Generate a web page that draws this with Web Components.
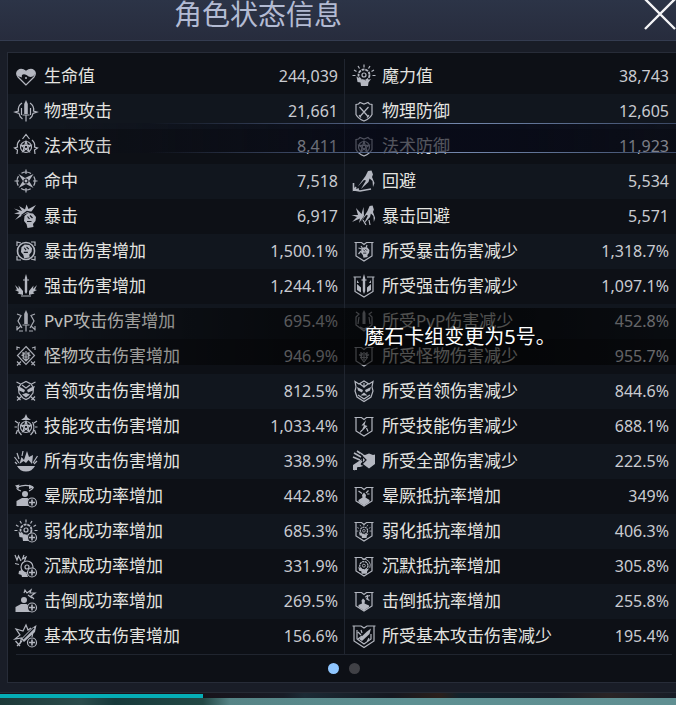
<!DOCTYPE html>
<html lang="zh-CN">
<head>
<meta charset="utf-8">
<meta name="viewport" content="width=device-width, initial-scale=1">
<title>角色状态信息</title>
<style>
  body {
    margin: 0;
    background: #191d27;
    color: #e4e4e0;
    font-family: "Noto Sans", "Noto Sans CJK SC", sans-serif;
    overflow: hidden;
  }
</style>
</head>
<body>
<status-window></status-window>

<script>
const PLUS = `<circle cx="18" cy="18.5" r="4.5" fill="#10141b"/><path d="M18 15.5v6M15 18.5h6" stroke-width="1.6"/>`;
const SHIELD = `<path d="M4 5.5 6.5 5 8 3.5 12 5 16 3.5 17.5 5 20 5.5V15.5Q18 19.5 12 22 6 19.5 4 15.5z"/>`;
const BANNER = `<path d="M2.5 3.5H9.5L12 5.5 14.5 3.5H21.5M4 3.5V17L12 22 20 17V3.5"/>`;
const STAR = `<circle cx="12" cy="13" r="5.5"/><path d="M12 7.500 15.200 17.500 7 11.300H17L8.800 17.500z"/>`;
const FIST = `<path class="f" d="M7 9 10.500 6 15.500 6.500 18.500 10 18 14 15.500 17 16 20 10 21 9 17 6.500 14z"/><path class="d" d="M10 9.500 12 12M12.500 8.500 15 11M9.500 14.500H14"/>`;
const HEAD = `<path class="f" d="M4.500 12.500 5.500 18 8.500 18.500 9 22H16L16.500 18.500 19 15 14 16.500 8 15z"/><circle cx="12" cy="11" r="5.500" stroke-width="1.800" stroke-dasharray="3 .800"/><circle cx="12" cy="11" r="2"/>`;
const RAYS = `<path d="M12 .500V3.500M6 2 7.500 4.500M18 2 16.500 4.500M2 6 4.500 7.500M22 6 19.500 7.500M.500 11.500H3.500M20.500 11.500H23.500"/>`;
const PERSON = `<circle class="f" cx="11" cy="10" r="3"/><path class="f" d="M2.500 22V17L8 14H13.500L17 16.500V22z"/>`;
const SWORD = `<path class="f" d="M12 1 13.800 5V15H10.200V5z"/><path d="M8.500 16H15.500M12 16V22.500"/>`;

const RUNNER = `<path class="f" d="M16 2 19.500 1.500 21 5.500 20 8 22.500 14 21 18 20.500 12 17.500 9.500 16.500 13 9 20 14 11.500 12 11 5.500 18 13.500 7z"/>`;

const ICONS = {
  heart: `<path d="M12 21 4 13C.500 8 5.500 2.500 12 7.500 18.500 2.500 23.500 8 20 13z"/><path class="f" d="M3.500 12C1 6.500 6.500 3 12 7.500 17.500 3 23 6.500 20.500 11 18 13.500 15.500 13.500 12.500 11 9.500 9.500 7 10.500 8 13.500z"/><circle class="f" cx="12" cy="14" r="1"/>`,
  blade: `${SWORD}<path d="M8 4Q3.500 7 4.500 12L1 13 5 14.500Q5.500 18 8.500 20M16 4Q20.500 7 19.500 12L23 13 19 14.500Q18.500 18 15.500 20M7.500 9V16M16.500 9V16"/>`,
  magic: `${STAR}<path d="M8.500 5 12 .500 15.500 5M6 6Q2.500 9 3.500 13L.500 14 3.500 16 3 20M18 6Q21.500 9 20.500 13L23.500 14 20.500 16 21 20"/>`,
  aim: `<circle cx="12" cy="12" r="9" stroke-dasharray="10 4.137" stroke-dashoffset="5"/><path d="M12 .500V5M12 19V23.500M.500 12H5M19 12H23.500"/><path class="f" d="M4.500 5 11 9 19.500 5 15 12 19.500 19 12 15 4.500 19 9 12z"/><circle class="d" cx="12" cy="12" r="2"/>`,
  crit: `<path class="f" d="M0 4.500 8 7 5 2 11 5.500 12.500 .500 14.500 5 22 1 17.500 7.500 9 11 1 16 6 10.500 0 9.500 5.500 8z"/><path class="d" d="M7 21 8 11 13 7.500 21 9"/><g transform="translate(3.500 3)">${FIST}</g>`,
  fist: `<circle cx="12" cy="12" r="8.500" stroke-width="1.600"/><g transform="translate(1 0) scale(.92)">${FIST}</g><path d="M3 7V3L7 4M21 17V21L17 20M3 17V21H7M17 3H21V7"/>`,
  heavy: `<path class="f" d="M12 0 13.200 4V18L12 20 10.800 18V4z"/><path d="M9 6H15M7 22H17"/><path class="f" d="M1 11 5 15 4.500 11.500 9 17V21L3.500 19.500 5 18 1 16 3 15.500zM23 11 19 15 19.500 11.500 15 17V21L20.500 19.500 19 18 23 16 21 15.500z"/>`,
  pvp: `${SWORD}<path d="M3 5 7 6.500 4 12 8 19M21 5 17 6.500 20 12 16 19M2.500 21 7 17M21.500 21 17 17M5 22H9M19 22H15M3 17V21.500M21 17V21.500"/>`,
  beast: `<path d="M12 2.500 20.500 11.500 12 20.500 3.500 11.500z"/><path d="M3 6V3L6 4M21 6V3L18 4M3 21.500 7 17.500M21 21.500 17 17.500M3 17.500 6.500 21M21 17.500 17.500 21"/><path d="M9 8V12L7.500 11M15 8V12L16.500 11M12 7V16M10.500 8.500 9 14 12 17 15 14 13.500 8.500M9 13H15"/>`,
  boss: `<path d="M7 5 12 2.500 17 5 19.500 9 19 14 15 19 12 20.500 9 19 5 14 4.500 9z"/><path d="M2.500 3 6.500 5M21.500 3 17.500 5M3 21.500 8 17M21 21.500 16 17M3 17.500 6.500 21M21 17.500 17.500 21M8 6 12 9 16 6"/><path class="f" d="M3 7 7 8.500 11 11 10 13.500 5 11.500zM21 7 17 8.500 13 11 14 13.500 19 11.500zM8 15.500 12 14 16 15.500 12 18.500z"/>`,
  skill: `${STAR}<path class="f" d="M12 0 13.500 3.500 17 6H7L10.500 3.500z"/><path d="M5.500 8Q3 12 5 18L7.500 21M18.500 8Q21 12 19 18L16.500 21M1 7 4 9M23 7 20 9M.500 13H3M21 13H23.500M3.500 16 2 20M20.500 16 22 20"/>`,
  all: `<path class="f" d="M5.500 15 7.500 8 10 11 13 2 15 8 19 6 18 15 14.500 11 12 14 9.500 12zM3 17H21Q18 22.500 12 22.500 6 22.500 3 17z"/><path d="M5 14 .500 8M5 10 3 4M19 14 23.500 7M20 15 23 12M8 7 9 2M3 15 1 13"/>`,
  stun: `<path d="M7 7Q1 5 4 3 9 .500 17 2 22 3.500 15 7"/><path class="f" d="M1 1.500 5.500 .500 4.500 5zM15 .500 20 3.500 15 5z"/>${PERSON}${PLUS}`,
  weak: `${HEAD}${RAYS}${PLUS}`,
  silence: `<path d="M1 1 3 6 4.500 2 7 7M10 1 8.500 5 12 3 10.500 7M1 9.500 5 10.500"/><g transform="translate(1 2)"><path class="f" d="M4 15 7 14 12 18 13 21H7L6.500 19 3.500 18z"/><circle cx="12" cy="11" r="6"/><circle cx="12" cy="11" r="2"/></g>${PLUS}`,
  knock: `<path d="M10 4 11 1 13 4 17 1 16 4 21 4 17 7 20 10M14 6 18 9"/><g transform="translate(-1 1)">${PERSON}</g>${PLUS}`,
  basic: `<path d="M6 20 7.500 14 1 15 6 11 2 5 9 7 12 1 14 6 17 4M19 8 18 13M3 22 8 17M1.500 17 6 22"/><path class="f" d="M22.500 1 21 8 10 18 7 15 18 4z"/><path class="d" d="M20 4 9 15"/>${PLUS}`,
  mana: `${HEAD}${RAYS}`,
  guard: `${SHIELD}<path d="M7.500 8 16.500 18M16.500 8 7.500 18M7 16 9 18.500M17 16 15 18.500"/>`,
  ward: `${SHIELD}${STAR}`,
  dodge: `${RUNNER}<path d="M1.500 14V21M2 21 8 22 19 20M4 18 2 21 7 20" stroke-width="1.600"/>`,
  critdodge: `<g transform="translate(4 0) scale(.85 1)">${RUNNER}</g><path class="f" d="M4 4 9.500 10 11.500 3 12 12 7 19 8 14.500 0 18 5 13-.500 11 6 11z"/><path d="M11 16 14 21M17 16 18 21"/>`,
  rcrit: `${BANNER}<g transform="translate(4.500 4) scale(.7)">${FIST}</g><path d="M6.500 9 10 10M9 7 11 10M6.500 15 9 12M15 6 14 9"/>`,
  rheavy: `<path d="M1.500 3H9M15 3H22.500M3 3V17.500L12 23 21 17.500V3"/><path class="f" d="M12 0 13.200 4V17L12 20 10.800 17V4zM5 10 9 13.500V18.500L5 16zM19 10 15 13.500V18.500L19 16zM5 6 7 9 5 9zM19 6 17 9 19 9z"/><path d="M9.500 6H14.500"/>`,
  rpvp: `<path d="M4 3 7 5 4 8V16L12 22 20 16V8L17 5 20 3M7 8 6 15M17 8 18 15M8 18 12 20 16 18"/><path class="f" d="M12 1 13.500 4V15H10.500V4z"/>`,
  rbeast: `${BANNER}<path d="M9 8V12L7 10.500M15 8V12L17 10.500M12 8V16M10.500 9 9 14 12 18 15 14 13.500 9M8 13.500H16"/>`,
  rboss: `<path d="M3 2.500 7 5 12 2 17 5 21 2.500 20 8 21 12 19 18 12 22.500 5 18 3 12 4 8zM6 16 12 20 18 16M12 4V9M8 5 12 8 16 5"/><path class="f" d="M5 8 11 11 10 13.500 6 11.500zM19 8 13 11 14 13.500 18 11.500zM8.500 16.500 12 13.500 15.500 16.500z"/>`,
  rskill: `${BANNER}<path class="f" d="M14 6 9.500 11.500 12 11.500 9 18 15.500 12 12.500 11z"/><path d="M8 18.500 10 16M14.500 14 16 17.500"/>`,
  rall: `<path class="f" d="M11 5.500 13 6 17 4.500 21 6 23 5.500V15L17 19.500 11 15zM1 16 10 10 8 14 11 17 8 18 5 18V21H1z"/><path d="M2 4 9 8M5 2 11 6M1 8 8 11M2 21 10 12" stroke-width="1.600"/><path class="d" d="M8 5 14 11 9 16"/>`,
  rstun: `${BANNER}<path d="M6.500 7 10 9.500M16.500 6.500 14 9M15 10H17.500"/><path class="f" d="M12 8.500 14 11 13.500 13.500 17.500 16V18L12 21.500 6.500 18V16L10.500 13.500 10 11z"/>`,
  rweak: `${BANNER}<g transform="translate(4 4.500) scale(.66)">${HEAD}${RAYS}</g>`,
  rsilence: `${BANNER}<g transform="translate(3 3.500) scale(.74)">${HEAD}<path d="M10 2.500A8.500 8.500 0 0 1 20 14"/></g>`,
  rknock: `${BANNER}<path d="M13 8 18 6.500M14 9.500 17.500 11.500M15 6 16 11"/><path class="f" d="M11 9.500 13 11.500 12.500 14.500 17 16.500V18L12 21.500 6.500 18V16L10 14.500 9.500 11.500z"/>`,
  rbasic: `<path d="M.500 2H9L12 4 15 2H23.500M2 2V17L12 23.500 22 17V2"/><path d="M5 6V15L12 20 19 15V10M6 8 9 11M6 15 10 12M15 18 17 14M9 6 10 9"/><path class="f" d="M19 4.500 17.500 10 10 17 7 15 15 7.500z"/>`
};

const LEFT = [
  ["heart", "生命值", "244,039"],
  ["blade", "物理攻击", "21,661"],
  ["magic", "法术攻击", "8,411"],
  ["aim", "命中", "7,518"],
  ["crit", "暴击", "6,917"],
  ["fist", "暴击伤害增加", "1,500.1%"],
  ["heavy", "强击伤害增加", "1,244.1%"],
  ["pvp", "PvP攻击伤害增加", "695.4%"],
  ["beast", "怪物攻击伤害增加", "946.9%"],
  ["boss", "首领攻击伤害增加", "812.5%"],
  ["skill", "技能攻击伤害增加", "1,033.4%"],
  ["all", "所有攻击伤害增加", "338.9%"],
  ["stun", "晕厥成功率增加", "442.8%"],
  ["weak", "弱化成功率增加", "685.3%"],
  ["silence", "沉默成功率增加", "331.9%"],
  ["knock", "击倒成功率增加", "269.5%"],
  ["basic", "基本攻击伤害增加", "156.6%"]
];

const RIGHT = [
  ["mana", "魔力值", "38,743"],
  ["guard", "物理防御", "12,605"],
  ["ward", "法术防御", "11,923"],
  ["dodge", "回避", "5,534"],
  ["critdodge", "暴击回避", "5,571"],
  ["rcrit", "所受暴击伤害减少", "1,318.7%"],
  ["rheavy", "所受强击伤害减少", "1,097.1%"],
  ["rpvp", "所受PvP伤害减少", "452.8%"],
  ["rbeast", "所受怪物伤害减少", "955.7%"],
  ["rboss", "所受首领伤害减少", "844.6%"],
  ["rskill", "所受技能伤害减少", "688.1%"],
  ["rall", "所受全部伤害减少", "222.5%"],
  ["rstun", "晕厥抵抗率增加", "349%"],
  ["rweak", "弱化抵抗率增加", "406.3%"],
  ["rsilence", "沉默抵抗率增加", "305.8%"],
  ["rknock", "击倒抵抗率增加", "255.8%"],
  ["rbasic", "所受基本攻击伤害减少", "195.4%"]
];

class StatIcon extends HTMLElement {
  constructor() {
    super();
    this.attachShadow({ mode: "open" });
  }

  static get styles() {
    return /* css */`
      :host {
        display: block;
        width: 24px;
        height: 24px;
        color: #b4b7c0;
      }

      svg {
        display: block;
        fill: none;
        stroke: currentColor;
        stroke-width: 1.2;
        overflow: visible;
      }

      .f {
        fill: currentColor;
        stroke: none;
      }

      .d {
        fill: none;
        stroke: #12161e;
      }
    `;
  }

  connectedCallback() {
    this.shadowRoot.innerHTML = /* html */`
    <style>${StatIcon.styles}</style>
    <svg width="24" height="24" viewBox="0 0 24 24" aria-hidden="true">${ICONS[this.getAttribute("name")]}</svg>`;
  }
}

class StatTable extends HTMLElement {
  constructor() {
    super();
    this.attachShadow({ mode: "open" });
  }

  static get styles() {
    return /* css */`
      :host {
        display: block;
      }

      table {
        width: 100%;
        border-collapse: collapse;
      }

      tr {
        height: 35px;
        background: #0d1016;
      }

      tr:nth-child(even) {
        background: #11161e;
      }

      th,
      td {
        padding: 0 0 2px;
        line-height: 24px;
        white-space: nowrap;
      }

      .icon {
        width: 24px;
        padding-left: var(--start, 6px);
        padding-right: 6px;
      }

      th {
        text-align: left;
        font-size: 17px;
        font-weight: 400;
      }

      .value {
        padding-right: var(--end, 6px);
        text-align: right;
        font-size: 16px;
        color: #c9cbd1;
      }
    `;
  }

  connectedCallback() {
    this.render();
  }

  get rows() {
    return this.getAttribute("side") === "right" ? RIGHT : LEFT;
  }

  render() {
    const rows = this.rows.map(([icon, label, value]) => /* html */`
      <tr>
        <td class="icon"><stat-icon name="${icon}"></stat-icon></td>
        <th scope="row">${label}</th>
        <td class="value">${value}</td>
      </tr>`).join("");
    this.shadowRoot.innerHTML = /* html */`
    <style>${StatTable.styles}</style>
    <table><tbody>${rows}</tbody></table>`;
  }
}

class WindowHeader extends HTMLElement {
  constructor() {
    super();
    this.attachShadow({ mode: "open" });
  }

  static get styles() {
    return /* css */`
      :host {
        display: flex;
        justify-content: space-between;
        align-items: flex-start;
        height: 40px;
        padding-left: 174px;
        border-bottom: 1px solid #343c50;
        background: linear-gradient(#2c3447, #272c3d);
      }

      h1 {
        margin: 0;
        color: #b3bbd3;
        font-size: 28px;
        font-weight: 400;
        line-height: 28px;
      }

      button {
        width: 32px;
        height: 30px;
        padding: 0;
        border: 0;
        background: none;
        cursor: pointer;
      }

      svg {
        display: block;
        stroke: #f4f4f6;
        stroke-width: 2.4;
      }
    `;
  }

  connectedCallback() {
    this.shadowRoot.innerHTML = /* html */`
    <style>${WindowHeader.styles}</style>
    <h1><slot></slot></h1>
    <button type="button" aria-label="关闭">
      <svg width="32" height="30" viewBox="0 0 32 30"><path d="M1-1 31 29M31-1 1 29"/></svg>
    </button>`;
  }
}

class PageDots extends HTMLElement {
  constructor() {
    super();
    this.attachShadow({ mode: "open" });
  }

  static get styles() {
    return /* css */`
      :host {
        display: flex;
        justify-content: center;
        align-items: center;
        gap: 10px;
        height: 27px;
        margin: 0 8px;
        border-top: 1px solid #20252f;
      }

      button {
        width: 11px;
        height: 11px;
        padding: 0;
        border: 0;
        border-radius: 50%;
        background: #404146;
      }

      button[aria-current] {
        background: #8fc6ff;
      }
    `;
  }

  connectedCallback() {
    this.shadowRoot.innerHTML = /* html */`
    <style>${PageDots.styles}</style>
    <button type="button" aria-label="1" aria-current="page"></button>
    <button type="button" aria-label="2"></button>`;
  }
}

class ToastMessage extends HTMLElement {
  constructor() {
    super();
    this.attachShadow({ mode: "open" });
  }

  static get styles() {
    return /* css */`
      :host {
        display: flex;
        justify-content: center;
        align-items: center;
        box-sizing: border-box;
        height: 57px;
        padding-left: 244px;
        background: linear-gradient(90deg, transparent, rgba(0, 0, 0, .25) 15%, rgba(0, 0, 0, .55) 42%, rgba(0, 0, 0, .65) 55%, rgba(0, 0, 0, .65) 75%, rgba(0, 0, 0, .45));
        color: #fff;
        font-size: 20px;
        line-height: 28px;
        white-space: nowrap;
      }
    `;
  }

  connectedCallback() {
    this.setAttribute("role", "status");
    this.shadowRoot.innerHTML = /* html */`
    <style>${ToastMessage.styles}</style>
    <slot></slot>`;
  }
}

class StatusWindow extends HTMLElement {
  constructor() {
    super();
    this.attachShadow({ mode: "open" });
  }

  static get styles() {
    return /* css */`
      :host {
        display: block;
        position: relative;
        overflow: hidden;
      }

      /* the panel runs on past the right edge of the window */
      .panel {
        margin: 11px -5px 9px 7px;
        border: 1px solid #272c38;
        background: #0d1016;
      }

      .columns {
        display: grid;
        grid-template-columns: 1fr 1fr;
        padding-top: 6px;
      }

      .second {
        --start: 7px;
        --end: 11px;
        border-left: 1px solid #20252f;
      }

      .glow,
      toast-message {
        position: absolute;
        left: 0;
        right: 0;
      }

      .glow {
        top: 123px;
        height: 28px;
        border: solid;
        border-width: 1px 0;
        border-image: linear-gradient(90deg, transparent 22%, #3d4a66 45%, #7488ad 68%, #566889 85%, #3a4763) 1;
        background: linear-gradient(90deg, transparent 8%, rgba(7, 9, 24, .45) 45%, rgba(6, 8, 24, .65) 58%, rgba(6, 8, 24, .65) 75%, rgba(7, 9, 24, .35));
      }

      toast-message {
        top: 308px;
      }

      .scene {
        border-top: 1px solid #252a34;
      }

      .exp {
        height: 4px;
        padding-top: 1px;
        background: linear-gradient(90deg, #17131a 30%, #181c26 42%, #1c2a35 45%, #151820 58%, #2a1f1b 65%, #12212a 68%, #171a24 82%, #2a2425 90%, #171c26);
      }

      .exp div {
        width: 30%;
        height: 4px;
        background: #05adb5;
      }

      .water {
        height: 8px;
        background: linear-gradient(90deg, #1d3938, #2b4b4b 12%, #17393a 17%, #234845 30%, #568486 34%, #5d9092 60%, #608f92);
      }
    `;
  }

  connectedCallback() {
    this.render();
    const header = this.shadowRoot.querySelector("window-header");
    header.shadowRoot.querySelector("button").addEventListener("click", () => this.remove());
  }

  render() {
    this.shadowRoot.innerHTML = /* html */`
    <style>${StatusWindow.styles}</style>
    <window-header>角色状态信息</window-header>
    <div class="panel">
      <div class="columns">
        <stat-table side="left"></stat-table>
        <stat-table side="right" class="second"></stat-table>
      </div>
      <page-dots></page-dots>
    </div>
    <div class="scene">
      <div class="exp"><div></div></div>
      <div class="water"></div>
    </div>
    <div class="glow"></div>
    <toast-message>魔石卡组变更为5号。</toast-message>`;
  }
}

customElements.define("stat-icon", StatIcon);
customElements.define("stat-table", StatTable);
customElements.define("window-header", WindowHeader);
customElements.define("page-dots", PageDots);
customElements.define("toast-message", ToastMessage);
customElements.define("status-window", StatusWindow);
</script>
</body>
</html>
